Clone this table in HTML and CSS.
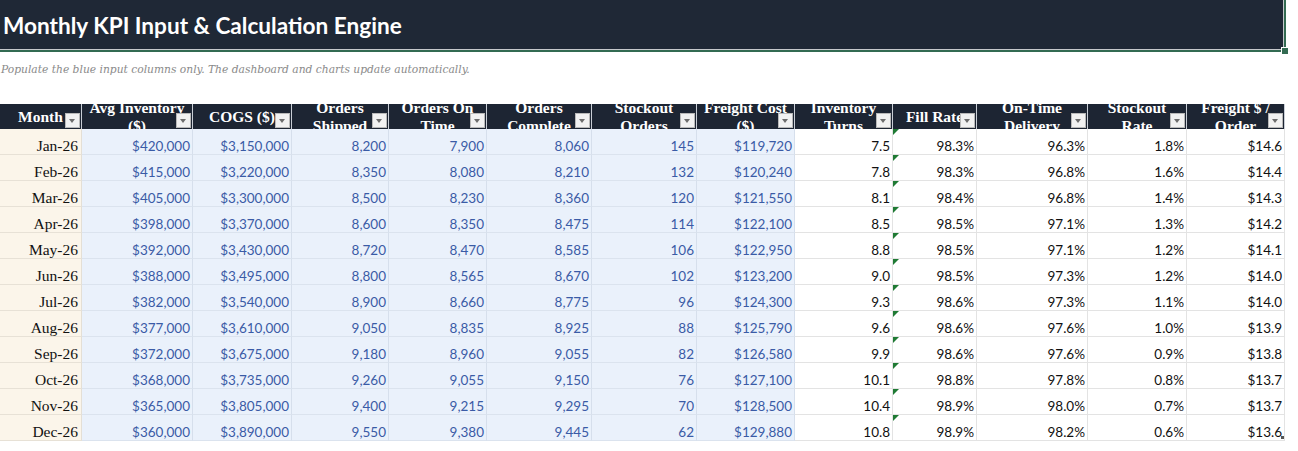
FILE: index.html
```html
<!DOCTYPE html>
<html>
<head>
<meta charset="utf-8">
<title>Monthly KPI Input &amp; Calculation Engine</title>
<link rel="stylesheet" href="styles.css">
</head>
<body>
<div class="title">
  <h1 class="title-text">Monthly KPI Input &amp; Calculation Engine</h1>
  <span class="handle"></span>
</div>
<p class="subtitle">Populate the blue input columns only. The dashboard and charts update automatically.</p>

<div class="sheet">
  <div class="row head">
    <div class="hc"><span class="ht">Month</span><span class="fb"></span></div>
    <div class="hc"><span class="ht">Avg Inventory<br>($)</span><span class="fb"></span></div>
    <div class="hc"><span class="ht">COGS ($)</span><span class="fb"></span></div>
    <div class="hc"><span class="ht">Orders<br>Shipped</span><span class="fb"></span></div>
    <div class="hc"><span class="ht">Orders On<br>Time</span><span class="fb"></span></div>
    <div class="hc"><span class="ht">Orders<br>Complete</span><span class="fb"></span></div>
    <div class="hc"><span class="ht">Stockout<br>Orders</span><span class="fb"></span></div>
    <div class="hc"><span class="ht">Freight Cost<br>($)</span><span class="fb"></span></div>
    <div class="hc"><span class="ht">Inventory<br>Turns</span><span class="fb"></span></div>
    <div class="hc"><span class="ht">Fill Rate</span><span class="fb"></span></div>
    <div class="hc"><span class="ht">On-Time<br>Delivery</span><span class="fb"></span></div>
    <div class="hc"><span class="ht">Stockout<br>Rate</span><span class="fb"></span></div>
    <div class="hc"><span class="ht">Freight $ /<br>Order</span><span class="fb"></span></div>
  </div>

  <div class="row"><div class="c m">Jan-26</div><div class="c in">$420,000</div><div class="c in">$3,150,000</div><div class="c in">8,200</div><div class="c in">7,900</div><div class="c in">8,060</div><div class="c in">145</div><div class="c in">$119,720</div><div class="c k">7.5</div><div class="c k t">98.3%</div><div class="c k">96.3%</div><div class="c k">1.8%</div><div class="c k">$14.6</div></div>
  <div class="row"><div class="c m">Feb-26</div><div class="c in">$415,000</div><div class="c in">$3,220,000</div><div class="c in">8,350</div><div class="c in">8,080</div><div class="c in">8,210</div><div class="c in">132</div><div class="c in">$120,240</div><div class="c k">7.8</div><div class="c k t">98.3%</div><div class="c k">96.8%</div><div class="c k">1.6%</div><div class="c k">$14.4</div></div>
  <div class="row"><div class="c m">Mar-26</div><div class="c in">$405,000</div><div class="c in">$3,300,000</div><div class="c in">8,500</div><div class="c in">8,230</div><div class="c in">8,360</div><div class="c in">120</div><div class="c in">$121,550</div><div class="c k">8.1</div><div class="c k t">98.4%</div><div class="c k">96.8%</div><div class="c k">1.4%</div><div class="c k">$14.3</div></div>
  <div class="row"><div class="c m">Apr-26</div><div class="c in">$398,000</div><div class="c in">$3,370,000</div><div class="c in">8,600</div><div class="c in">8,350</div><div class="c in">8,475</div><div class="c in">114</div><div class="c in">$122,100</div><div class="c k">8.5</div><div class="c k t">98.5%</div><div class="c k">97.1%</div><div class="c k">1.3%</div><div class="c k">$14.2</div></div>
  <div class="row"><div class="c m">May-26</div><div class="c in">$392,000</div><div class="c in">$3,430,000</div><div class="c in">8,720</div><div class="c in">8,470</div><div class="c in">8,585</div><div class="c in">106</div><div class="c in">$122,950</div><div class="c k">8.8</div><div class="c k t">98.5%</div><div class="c k">97.1%</div><div class="c k">1.2%</div><div class="c k">$14.1</div></div>
  <div class="row"><div class="c m">Jun-26</div><div class="c in">$388,000</div><div class="c in">$3,495,000</div><div class="c in">8,800</div><div class="c in">8,565</div><div class="c in">8,670</div><div class="c in">102</div><div class="c in">$123,200</div><div class="c k">9.0</div><div class="c k t">98.5%</div><div class="c k">97.3%</div><div class="c k">1.2%</div><div class="c k">$14.0</div></div>
  <div class="row"><div class="c m">Jul-26</div><div class="c in">$382,000</div><div class="c in">$3,540,000</div><div class="c in">8,900</div><div class="c in">8,660</div><div class="c in">8,775</div><div class="c in">96</div><div class="c in">$124,300</div><div class="c k">9.3</div><div class="c k t">98.6%</div><div class="c k">97.3%</div><div class="c k">1.1%</div><div class="c k">$14.0</div></div>
  <div class="row"><div class="c m">Aug-26</div><div class="c in">$377,000</div><div class="c in">$3,610,000</div><div class="c in">9,050</div><div class="c in">8,835</div><div class="c in">8,925</div><div class="c in">88</div><div class="c in">$125,790</div><div class="c k">9.6</div><div class="c k t">98.6%</div><div class="c k">97.6%</div><div class="c k">1.0%</div><div class="c k">$13.9</div></div>
  <div class="row"><div class="c m">Sep-26</div><div class="c in">$372,000</div><div class="c in">$3,675,000</div><div class="c in">9,180</div><div class="c in">8,960</div><div class="c in">9,055</div><div class="c in">82</div><div class="c in">$126,580</div><div class="c k">9.9</div><div class="c k t">98.6%</div><div class="c k">97.6%</div><div class="c k">0.9%</div><div class="c k">$13.8</div></div>
  <div class="row"><div class="c m">Oct-26</div><div class="c in">$368,000</div><div class="c in">$3,735,000</div><div class="c in">9,260</div><div class="c in">9,055</div><div class="c in">9,150</div><div class="c in">76</div><div class="c in">$127,100</div><div class="c k">10.1</div><div class="c k t">98.8%</div><div class="c k">97.8%</div><div class="c k">0.8%</div><div class="c k">$13.7</div></div>
  <div class="row"><div class="c m">Nov-26</div><div class="c in">$365,000</div><div class="c in">$3,805,000</div><div class="c in">9,400</div><div class="c in">9,215</div><div class="c in">9,295</div><div class="c in">70</div><div class="c in">$128,500</div><div class="c k">10.4</div><div class="c k t">98.9%</div><div class="c k">98.0%</div><div class="c k">0.7%</div><div class="c k">$13.7</div></div>
  <div class="row"><div class="c m">Dec-26</div><div class="c in">$360,000</div><div class="c in">$3,890,000</div><div class="c in">9,550</div><div class="c in">9,380</div><div class="c in">9,445</div><div class="c in">62</div><div class="c in">$129,880</div><div class="c k">10.8</div><div class="c k t">98.9%</div><div class="c k">98.2%</div><div class="c k">0.6%</div><div class="c k last">$13.6<span class="rz"></span></div></div>
</div>
</body>
</html>
```
FILE: styles.css
```css
html, body {
  margin: 0;
  padding: 0;
  background: #ffffff;
}

.title {
  position: relative;
  width: 1284px;
  height: 50px;
  background: #1f2836;
  border-right: 2px solid #336b52;
  border-bottom: 2px solid #336b52;
  box-shadow: inset -1px -1px 0 rgba(255,255,255,0.75);
  display: flex;
  align-items: center;
}

.title-text {
  margin: 0 0 0 3px;
  font-family: "Lato", "Liberation Sans", sans-serif;
  font-weight: 700;
  font-size: 22.6px;
  color: #ffffff;
}

.handle {
  position: absolute;
  right: -5px;
  bottom: -5px;
  width: 6px;
  height: 6px;
  background: #336b52;
  border: 1px solid #ffffff;
}

.subtitle {
  margin: 0;
  height: 52px;
  box-sizing: border-box;
  padding: 10px 0 0 1px;
  line-height: 16px;
  font-family: "DejaVu Serif", "Liberation Serif", serif;
  font-style: italic;
  font-size: 10.7px;
  color: #8a8a8a;
}

.sheet {
  width: 1285px;
}

.row {
  display: grid;
  grid-template-columns: 82px 111px 99px 97px 98px 105px 105px 98px 98px 84px 111px 99px 98px;
  height: 26px;
}

.row.head {
  height: 25px;
}

.hc {
  position: relative;
  overflow: hidden;
  background: #1d2533;
  border-right: 1px solid #c9ced6;
  display: flex;
  align-items: center;
  justify-content: center;
  text-align: center;
}

.ht {
  font-family: "Liberation Serif", "Times New Roman", serif;
  font-weight: 700;
  font-size: 15.5px;
  line-height: 18px;
  color: #ffffff;
  white-space: nowrap;
}

.fb {
  position: absolute;
  right: 1px;
  bottom: 1px;
  width: 15px;
  height: 15px;
  box-sizing: border-box;
  background: #f1f1f1;
  border: 1px solid #b9b9b9;
}

.fb::after {
  content: "";
  position: absolute;
  left: 3px;
  top: 5px;
  border-left: 3.5px solid transparent;
  border-right: 3.5px solid transparent;
  border-top: 4px solid #6d6d6d;
}

.c {
  position: relative;
  box-sizing: border-box;
  border-right: 1px solid #dfe3e8;
  border-bottom: 1px solid #dfe3e8;
  display: flex;
  align-items: flex-end;
  justify-content: flex-end;
  padding: 0 2px 0 0;
  line-height: 16px;
  white-space: nowrap;
  font-family: "Lato", "Liberation Sans", sans-serif;
  font-size: 13.5px;
  color: #111111;
}

.c.m {
  background: #fbf5ea;
  border-right-color: #e4dfd5;
  border-bottom-color: #e7e1d6;
  font-family: "Liberation Serif", "Times New Roman", serif;
  font-size: 15.5px;
  padding-right: 3px;
}

.c.in {
  background: #eaf1fb;
  border-right-color: #d6dfec;
  border-bottom-color: #dbe3ee;
  color: #3a5ba6;
}

.c.k {
  background: #ffffff;
  border-right-color: #e3e3e3;
  border-bottom-color: #e3e3e3;
}

.c.t::before {
  content: "";
  position: absolute;
  left: 0;
  top: 0;
  border-top: 6px solid #1f7a34;
  border-right: 6px solid transparent;
}

.rz {
  position: absolute;
  right: 0;
  bottom: 1px;
  width: 3px;
  height: 3px;
  background: #555555;
}
```
